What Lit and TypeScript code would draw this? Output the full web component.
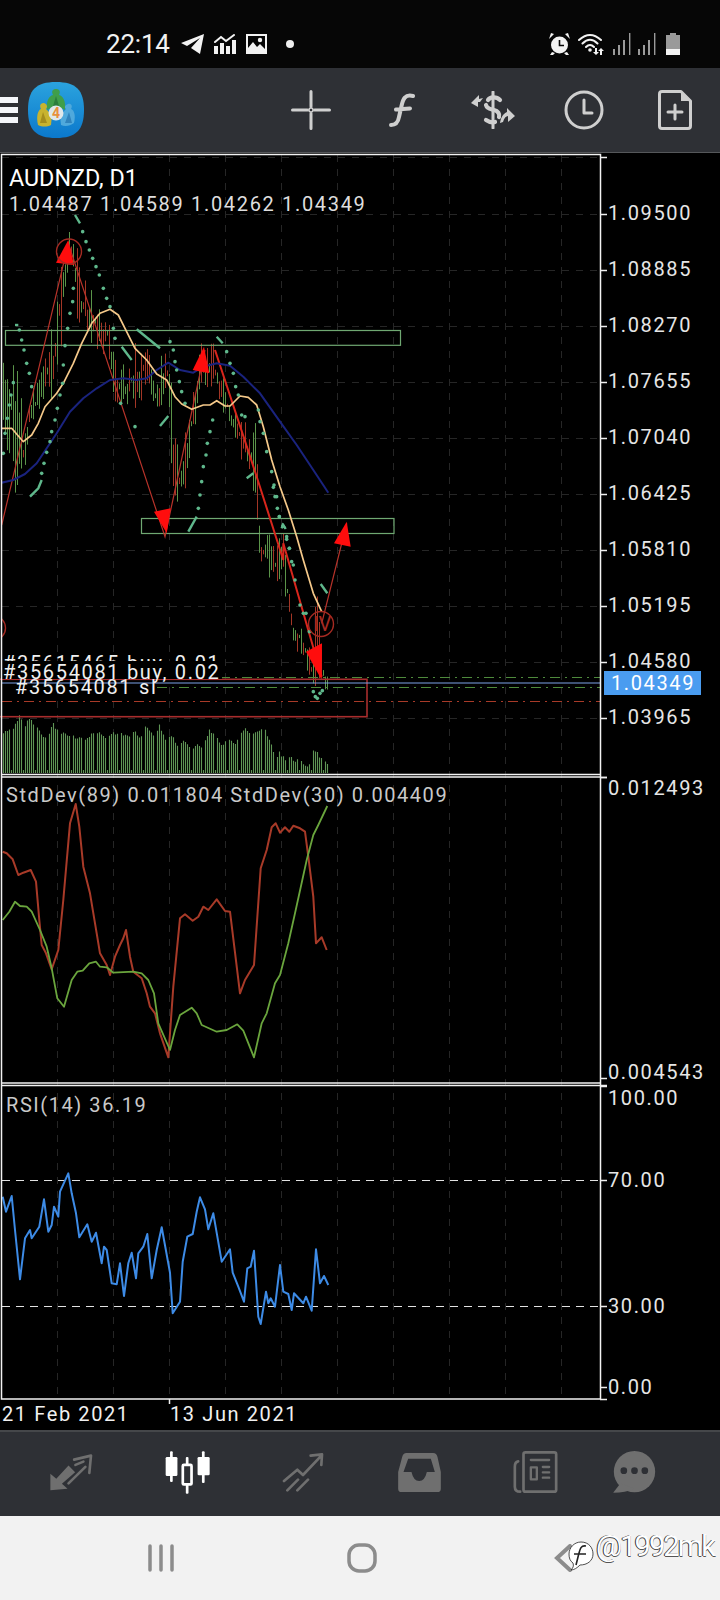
import { LitElement, html, css, svg } from "lit";
import { customElement } from "lit/decorators.js";

type P = [number, number];
// traced coordinates come in 3x crop units: map them back to page pixels
const z = (pts: number[], ox: number, oy: number): P[] => {
  const out: P[] = [];
  for (let i = 0; i < pts.length; i += 2) out.push([pts[i] / 3 + ox, pts[i + 1] / 3 + oy]);
  return out;
};
const pl = (p: P[]) => p.map((q) => `${q[0].toFixed(1)},${q[1].toFixed(1)}`).join(" ");
const rng = (seed: number) => () => {
  seed = (seed * 1664525 + 1013904223) >>> 0;
  return seed / 4294967296;
};

const YELLOW = [
  ...z([5,685,35,685,70,725,95,705,115,670,135,620,170,580,190,550,220,490,245,430,275,370,300,340,330,328,355,345,375,385,405,445,440,480,470,522,500,540,525,590,545,612,575,628,610,615,630,615,650,602,675,618,690,618,720,588,745,592,770,615,790,680,815,780,840,860,865,930,890,1010,910,1080], 0, 200),
  ...z([550,240,580,340,605,395], 120, 480),
];
const BLUE = z([5,848,40,840,75,822,110,790,140,745,170,700,210,635,250,595,290,565,330,540,370,535,410,540,440,535,470,510,505,488,540,510,580,518,610,500,650,490,690,497,730,530,780,580,840,665,890,735,940,810,985,878], 0, 200);
const STD_RED = z([8,215,20,220,38,238,55,285,70,278,92,270,108,305,118,420,125,495,138,520,155,568,175,510,190,360,210,130,227,72,238,140,250,260,270,340,290,460,300,520,320,555,330,585,345,530,360,495,370,475,378,450,390,530,400,575,425,595,440,640,450,680,465,700,480,760,505,832,520,620,540,415,555,403,578,422,595,410,610,380,625,390,650,358,675,393,690,395,720,640,735,600,762,555,782,265,800,210,815,142,827,130,840,158,855,142,868,155,880,137,900,145,915,155,925,230,940,350,948,490,965,472,980,510], 0, 780);
const STD_GREEN = z([8,420,28,395,45,365,60,378,80,380,95,395,120,450,140,500,155,565,172,655,192,680,215,600,232,575,248,572,268,550,288,545,300,560,320,562,340,578,400,575,425,580,445,600,462,640,475,730,510,810,525,750,540,705,575,683,590,700,605,735,650,755,680,750,712,733,730,752,762,832,785,730,800,700,825,610,840,585,865,490,885,400,920,240,940,165,955,135,982,78], 0, 780);
const RSI = z([8,320,18,365,35,318,45,420,60,568,75,445,90,420,95,445,118,410,132,328,145,425,155,405,162,350,175,380,180,305,205,250,215,310,228,370,238,442,262,403,275,455,288,428,305,520,312,470,320,480,335,580,350,583,360,520,372,618,385,520,395,488,408,565,415,490,430,470,442,432,455,565,470,480,485,412,510,548,518,670,540,635,548,515,562,440,578,432,590,365,600,322,615,358,625,418,640,370,665,515,690,478,698,548,715,590,732,635,742,535,752,530,762,482,775,680,782,702,798,605,805,640,812,625,825,650,840,525,850,605,865,612,875,660,882,610,910,640,918,620,935,662,948,478,960,580,972,558,985,585], 0, 1090);

// [x, high, low] envelope of the candle wicks
const BAND: [number, number, number][] = [];
const band2 = [10,460,680,45,370,880,75,700,870,90,570,670,110,550,670,135,430,620,160,370,600,185,80,470,205,95,190,218,50,250,240,180,420,260,245,420,285,280,440,305,330,465,325,330,470,345,470,610,370,470,680,390,500,580,410,395,670,440,420,560,465,520,660,490,450,640,505,430,600,520,600,900,540,760,940,555,700,900,580,570,700,600,420,620,620,440,560,640,415,590,655,455,620,680,560,660,710,650,720,725,640,790,745,680,830,770,620,960];
for (let i = 0; i < band2.length; i += 3) BAND.push([band2[i] / 3, band2[i + 1] / 3 + 200, band2[i + 2] / 3 + 200]);
const band3 = [415,0,250,425,150,280,445,150,290,470,200,320,490,130,340,500,250,380,515,370,480,525,420,510,540,420,520,555,450,550,575,500,640,590,310,650,605,480,650,617,510,680,625,545,630];
for (let i = 0; i < band3.length; i += 3) BAND.push([band3[i] / 3 + 120, band3[i + 1] / 3 + 480, band3[i + 2] / 3 + 480]);

const bandAt = (x: number): [number, number] => {
  let i = 0;
  while (i < BAND.length - 2 && BAND[i + 1][0] < x) i++;
  const a = BAND[i], b = BAND[i + 1];
  const t = Math.max(0, Math.min(1, (x - a[0]) / (b[0] - a[0] || 1)));
  return [a[1] + (b[1] - a[1]) * t, a[2] + (b[2] - a[2]) * t];
};

const VOL_TOP = z([8,335,45,315,58,278,75,315,90,285,115,325,140,350,160,305,180,335,195,335,215,345,235,345,250,355,262,345,295,330,320,345,340,335,365,335,385,345,400,325,420,345,440,310,460,345,478,310,495,350,515,340,535,370,550,355,575,375,595,370,610,375,628,320,650,350,670,370,690,350,710,365,735,310,755,345,770,330,790,315,810,350,825,410,840,390,855,415,870,405,885,415,905,420,925,430,945,380,960,405,982,430], 0, 620);
const volAt = (x: number) => {
  let i = 0;
  while (i < VOL_TOP.length - 2 && VOL_TOP[i + 1][0] < x) i++;
  const a = VOL_TOP[i], b = VOL_TOP[i + 1];
  return a[1] + (b[1] - a[1]) * Math.max(0, Math.min(1, (x - a[0]) / (b[0] - a[0])));
};

const candles = () => {
  const r = rng(77);
  const green: string[] = [], red: string[] = [], vols: string[] = [];
  for (let i = 0; i < 163; i++) {
    const x = 3.5 + 2 * i;
    const [hi, lo] = bandAt(x);
    const h = lo - hi;
    const weekend = i % 6 === 4;
    const y1 = weekend ? hi + h * 0.45 : hi + r() * h * 0.5;
    const y2 = weekend ? hi + h * 0.55 : lo - r() * h * 0.4;
    const seg = `M${x} ${y1.toFixed(1)}V${y2.toFixed(1)}`;
    (r() > 0.5 ? green : red).push(seg);
    const top = weekend ? 770 : volAt(x) + r() * 4;
    vols.push(`M${x} ${top.toFixed(1)}V773`);
  }
  return { green: green.join(""), red: red.join(""), vols: vols.join("") };
};
const CANDLES = candles();

const SAR_SOLID = [
  z([225,45,240,70], 0, 200), z([90,890,115,865,125,840], 0, 200), z([365,440,395,480], 0, 200),
  z([410,388,480,445], 0, 200), z([480,678,505,648], 0, 200), z([565,995,590,950], 0, 200),
  z([650,410,668,430], 0, 200), z([740,835,760,820], 0, 200), z([845,985,848,975,856,985], 0, 200),
  z([45,375,55,375], 0, 200), z([602,312,622,340], 120, 480), z([485,140,490,135,497,147], 120, 480),
];
const SAR_DOTS = [
  ...z([248,95,258,125,268,150,278,175,288,200,298,225,310,265,320,295,330,320,340,385,345,415,10,760,15,700,22,655,28,615,33,585,40,548,58,390,65,420,72,450,80,490,88,520,95,560,125,820,132,790,140,757,150,725,155,695,165,660,172,625,180,585,188,550,190,495,195,437,203,385,210,340,218,305,220,265,362,610,405,680,510,425,520,450,525,485,530,510,538,545,545,575,555,610,595,925,600,885,605,845,610,800,618,765,622,730,630,695,638,660,680,455,690,490,700,520,707,560,715,585,725,645,735,650,775,630,780,665,790,700,800,755,815,815,822,855,830,890,838,950,860,1010,868,1045], 0, 200),
  ...z([460,22,465,50,472,85,478,110,500,178,508,205,515,245,520,255,525,300,540,375,550,400,558,400,568,455,580,635,586,650,592,655,600,640,607,632], 120, 480),
];

const GRID_X = [57, 113, 169, 225, 281, 337, 393, 449, 505, 561];
const PRICES: [string, number][] = [["1.09500",214],["1.08885",270],["1.08270",326],["1.07655",382],["1.07040",438],["1.06425",494],["1.05810",550],["1.05195",606],["1.04580",662],["1.03965",718]];
const SCALE_LABELS: [string, number, number][] = [["0.012493",777,795],["0.004543",1078,1079],["100.00",1086,1105],["70.00",1180,1187],["30.00",1306,1313],["0.00",1387,1394]];

@customElement("app-root")
export class AppRoot extends LitElement {
  static styles = css`
    :host { display: block; width: 720px; height: 1600px; background: #000; font-family: Roboto, "Noto Sans", sans-serif; overflow: hidden; }
    .status { height: 68px; box-sizing: border-box; padding: 20px 40px 0 106px; background: #060606; display: flex; align-items: center; color: #f2f2f2; }
    .time { font-size: 26px; width: 65px; letter-spacing: -0.2px; }
    .status svg { display: block; flex: none; }
    .s-left { display: flex; align-items: center; gap: 10px; }
    .dot { width: 8px; height: 8px; border-radius: 50%; background: #eee; margin-left: 9px; }
    .spacer { flex: 1; }
    .s-right { display: flex; align-items: center; gap: 7px; }
    .tools { height: 84px; background: #2e3035; border-bottom: 1px solid #55575a; box-sizing: content-box; display: flex; align-items: center; }
    .burger { width: 18px; height: 26px; display: flex; flex-direction: column; justify-content: space-between; margin-right: 10px; }
    .burger i { display: block; height: 6px; background: #f4f6fa; }
    .logo { display: block; flex: none; }
    .cell { width: 91px; display: flex; justify-content: center; flex: none; }
    .cell svg { display: block; }
    .chart { display: block; width: 720px; height: 1277px; background: #000; }
    .grid { stroke: #262626; stroke-width: 1; stroke-dasharray: 7 7; fill: none; }
    .frame { stroke: #f2f2f2; stroke-width: 1.5; fill: none; }
    .tick { stroke: #eee; stroke-width: 1.5; }
    .lbl { fill: #e6e6e6; font-size: 20px; letter-spacing: 1.62px; }
    .tag { fill: #4a9cf0; }
    .tagt { fill: #fff; font-size: 20px; letter-spacing: 1.62px; }
    .sym { fill: #fff; font-size: 23.3px; }
    .ohlc { fill: #dedede; font-size: 20px; letter-spacing: 1.67px; }
    .ind { fill: #c9c9c9; font-size: 20px; letter-spacing: 1.56px; }
    .date { fill: #f0f0f0; font-size: 20px; letter-spacing: 1.6px; }
    .ord { fill: #f0f0f0; font-size: 20px; letter-spacing: 1.67px; }
    .cg { stroke: #5a9449; stroke-width: 1; fill: none; }
    .cr { stroke: #a33626; stroke-width: 1; fill: none; }
    .vol { stroke: #5f9555; stroke-width: 1.1; fill: none; }
    .ma-y { stroke: #f5c98a; stroke-width: 1.7; fill: none; stroke-linejoin: round; }
    .ma-b { stroke: #1a237e; stroke-width: 2; fill: none; stroke-linejoin: round; }
    .sar { stroke: #5fb88c; stroke-width: 2.4; fill: none; }
    .sard { fill: #5fb88c; }
    .zone { stroke: #6fa872; stroke-width: 1.2; fill: none; }
    .zig { stroke: #b8332a; stroke-width: 1.2; fill: none; }
    .zig2 { stroke: #d9261c; stroke-width: 2; fill: none; }
    .arr { fill: #ff0d0d; }
    .ring { stroke: #a52a22; stroke-width: 1.4; fill: none; }
    .iv { fill: #a52a22; font-size: 20px; }
    .rbox { stroke: #a82d2d; stroke-width: 1.6; fill: none; }
    .ln-b { stroke: #7da2e8; stroke-width: 1.2; }
    .ln-g { stroke: #4e8a3c; stroke-width: 1; stroke-dasharray: 10 5 2 5; }
    .ln-r { stroke: #a83a28; stroke-width: 1; stroke-dasharray: 10 5 2 5; }
    .blank { fill: #000; }
    .s-r { stroke: #a83a28; stroke-width: 2; fill: none; stroke-linejoin: round; }
    .s-g { stroke: #6aa53d; stroke-width: 1.8; fill: none; stroke-linejoin: round; }
    .rsi { stroke: #3d8be6; stroke-width: 2; fill: none; stroke-linejoin: round; }
    .lvl { stroke: #e2e2e2; stroke-width: 1.2; stroke-dasharray: 8 6; }
    .nav { height: 84px; box-sizing: border-box; border-top: 2px solid #45474a; background: #2e3035; display: flex; align-items: center; padding: 0 0 4px 13px; height: 86px; }
    .nc { width: 116px; display: flex; justify-content: center; flex: none; }
    .nc.last { width: 82px; }
    .nc svg { display: block; }
    .g { fill: #6f6f6f; }
    .gs { stroke: #6f6f6f; fill: none; stroke-width: 8; stroke-linecap: round; stroke-linejoin: round; }
    .w { fill: #fff; }
    .ws { stroke: #fff; fill: none; stroke-width: 8; stroke-linecap: round; }
    .t { stroke: #cfcfcf; fill: none; stroke-width: 3; stroke-linecap: round; stroke-linejoin: round; }
    .tf { fill: #cfcfcf; }
    .sys { height: 84px; background: #f2f2f2; display: flex; align-items: center; position: relative; }
    .sys svg { display: block; flex: none; }
    .mark { position: absolute; left: 596px; top: 13px; font-size: 29px; letter-spacing: -1.9px; color: #fff; text-shadow: -1px 0 #333, 0 1px #555; white-space: nowrap; }
    .mark-icon { position: absolute; left: 568px; top: 25px; }
    .sb { fill: #f2f2f2; }
    .sbs { stroke: #f2f2f2; stroke-width: 2; fill: none; stroke-linecap: round; }
    .sd { fill: #9a9a9a; }
    .skt { stroke: #060606; stroke-width: 1.6; fill: none; }
    .sys-i { fill: none; stroke: #8c8c8c; stroke-width: 3.5; stroke-linecap: round; }
    .sys-mid { margin-left: 173px; }
    .sys-back { margin-left: 177px; }
    .sys-first { margin-left: 148px; }
    .wm { fill: #fff; stroke: #222; stroke-width: 0.8; }
    .wmf { stroke: #222; stroke-width: 1.6; fill: none; }
    .lg-g { fill: #3f9e4a; }
    .lg-gd { fill: #2b7d3c; }
    .lg-y { fill: #c8b32e; }
    .lg-yd { fill: #a48d1c; }
    .lg-b { fill: #4fa9dc; }
    .lg-bd { fill: #2f83bd; }
    .lg-w { fill: #dfe7ea; }
    .lg-4 { fill: #e8903a; font-size: 14px; font-weight: 700; }
  `;

  private statusIcons() {
    return html`
      <div class="s-left">
        <span class="time">22:14</span>
        <svg width="23" height="20" viewBox="0 0 23 20"><path class="sb" d="M23 0 L0 9 L6 12 L19 4 L10 14 L19 20 Z"/></svg>
        <svg width="22" height="20" viewBox="0 0 22 20"><path class="sb" d="M0 12h4v8H0zM6 9h4v11H6zM12 12h4v8h-4zM18 6h4v14h-4z"/><path class="sbs" d="M1 8 L7 3 L12 7 L20 1"/></svg>
        <svg width="21" height="20" viewBox="0 0 21 20"><path class="sb" fill-rule="evenodd" d="M0 0H21V20H0Z M2 2V14L7 8L11 13L14 10L19 15V2Z"/><circle class="sb" cx="14" cy="6" r="2.2"/></svg>
        <span class="dot"></span>
      </div>
      <span class="spacer"></span>
      <div class="s-right">
        <svg width="23" height="22" viewBox="0 0 23 22">
          <circle class="sb" cx="11.5" cy="12" r="8.5"/><path class="skt" d="M11.5 7v5.5H16"/>
          <path class="sb" d="M1 6 L6 1 L3 0 Z M22 6 L17 1 L20 0 Z M4 19l-2 3h3l2-2zM19 19l2 3h-3l-2-2z"/>
        </svg>
        <svg width="28" height="22" viewBox="0 0 28 22">
          <path class="sbs" d="M1 7 Q12 -3 23 7M4.5 10.5 Q12 3 19.5 10.5M8 14 Q12 10 16 14"/>
          <circle class="sb" cx="12" cy="17" r="1.8"/>
          <path class="sb" d="M17 15h2v4h2l-3 3-3-3h2zM24 22h-2v-4h-2l3-3 3 3h-2z"/>
        </svg>
        <svg width="19" height="22" viewBox="0 0 19 22"><path class="sd" d="M0 16h2v6H0zM5 12h2v10H5zM10 7h2v15h-2zM16 0h1.4v22H16z"/></svg>
        <svg width="19" height="22" viewBox="0 0 19 22" style="margin-left:-0.5px"><path class="sd" d="M0 16h2v6H0zM5 12h2v10H5zM10 7h2v15h-2zM16 0h1.4v22H16z"/></svg>
        <svg width="14" height="22" viewBox="0 0 14 22" style="margin-left:2px"><path class="sd" d="M4 0h6v2h4v14H0V2h4z" /><rect class="sb" y="16" width="14" height="6"/></svg>
      </div>`;
  }

  private toolbar() {
    return html`
      <div class="tools">
        <div class="burger"><i></i><i></i><i></i></div>
        <svg class="logo" width="56" height="56" viewBox="0 0 56 56">
          <defs><linearGradient id="lg" x1="0" y1="0" x2="0" y2="1"><stop offset="0" stop-color="#2ba3de"/><stop offset="1" stop-color="#0b78cc"/></linearGradient></defs>
          <path fill="url(#lg)" d="M28 0 C48 0 56 8 56 28 C56 48 48 56 28 56 C8 56 0 48 0 28 C0 8 8 0 28 0Z"/>
          <path class="lg-g" d="M19 28 C18 19 21 14 25 13 C23 9 25 7 28 7 C31 7 33 9 31 13 C35 14 38 19 37 28 C32 24 24 24 19 28Z"/>
          <path class="lg-gd" d="M28 14 L31 24 L25 24Z"/>
          <path class="lg-y" d="M10 43 C8 34 10 28 13 27 C11 23 13 21 16 21 C19 22 20 25 18 27 L24 33 L23 43 C19 45 14 45 10 43Z"/>
          <path class="lg-yd" d="M15 30 L19 41 L12 41Z"/>
          <path class="lg-b" d="M46 41 C48 33 46 28 43 27 C45 24 43 21 40 22 C37 23 36 25 38 27 L32 34 L33 43 C37 45 42 44 46 41Z"/>
          <path class="lg-bd" d="M41 30 L37 41 L44 41Z"/>
          <circle class="lg-w" cx="28" cy="31" r="7.500"/><text class="lg-4" x="24" y="36">4</text>
        </svg>
        <span class="spacer" style="flex:1"></span>
        <div class="cell"><svg width="40" height="40" viewBox="0 0 40 40">
          <path class="t" d="M1.500 20H16.500M23.500 20H38.500M20 1.500V16.500M20 23.500V38.500"/><circle class="t" style="stroke-width:1.5" cx="20" cy="20" r="2"/></svg></div>
        <div class="cell"><svg width="26" height="34" viewBox="0 0 26 34">
          <path class="t" style="stroke-width:4" d="M24 3 C16 1 14 6 12.500 13 L10 24 C9 30 6 32 2 32M7 16.500 L21 15.500"/></svg></div>
        <div class="cell"><svg width="46" height="38" viewBox="0 0 46 38">
          <path class="t" d="M23 1V37"/>
          <path class="t" style="stroke-width:4.2" d="M30 9 C26 5 20 6 18 9 M16 14 C17 18 21 18 24 19 C28 20 30 23 29 26 M25 31 C22 32 19 31 16 29"/>
          <path class="tf" d="M1 12 L9 4 L9 8 L13 7 L10 11 L8 11 L8 16 Z M45 25 L37 17 L37 21 C33 23 31 26 30 32 L33 31 C34 27 36 25 38 25 L38 31 Z"/></svg></div>
        <div class="cell"><svg width="40" height="40" viewBox="0 0 40 40">
          <circle class="t" cx="20" cy="20" r="18"/><path class="t" d="M20 10V23H28"/></svg></div>
        <div class="cell"><svg width="34" height="40" viewBox="0 0 34 40">
          <path class="t" d="M4 1.500H23L32.500 11V36C32.500 37.500 31.500 38.500 30 38.500H4C2.500 38.500 1.500 37.500 1.500 36V4C1.500 2.500 2.500 1.500 4 1.500Z"/>
          <path class="tf" d="M23 1.500 L32.500 11 H23Z"/><path class="t" d="M17 15V29M10 22H24"/></svg></div>
      </div>`;
  }

  private chart() {
    return svg`
      <defs>
        <clipPath id="pc"><rect x="2" y="155" width="598" height="619"/></clipPath>
      </defs>
      ${GRID_X.map((x) => svg`<path class="grid" d="M${x + 0.5} 155V1399"/>`)}
      <path class="grid" d="M2 157.500H600"/>
      ${PRICES.map(([, y]) => svg`<path class="grid" d="M2 ${y + 0.5}H600"/>`)}

      <g clip-path="url(#pc)">
        <path class="cg" d=${CANDLES.green}/>
        <path class="cr" d=${CANDLES.red}/>
        <path class="vol" d=${CANDLES.vols}/>
        <rect class="zone" x="5.500" y="330.500" width="395" height="14.800"/>
        <rect class="zone" x="141.500" y="518.500" width="252.500" height="15"/>
        <polyline class="zig" points=${pl(z([5,975,205,130,495,1010,615,450], 0, 200))}/>
        <polyline class="zig2" points=${pl([...z([645,450,770,830,850,1080], 0, 200), ...z([490,190,605,590], 120, 480)])}/>
        <polyline class="zig" points=${pl(z([605,430,680,130], 120, 480))}/>
        <polyline class="ma-b" points=${pl(BLUE)}/>
        <polyline class="ma-y" points=${pl(YELLOW)}/>
        ${SAR_SOLID.map((s) => svg`<polyline class="sar" points=${pl(s)}/>`)}
        ${SAR_DOTS.map((p) => svg`<circle class="sard" cx=${p[0]} cy=${p[1]} r="1.800"/>`)}
        <polygon class="arr" points=${pl(z([168,188,205,120,222,195], 0, 200))}/>
        <polygon class="arr" points=${pl(z([578,510,612,440,628,520], 0, 200))}/>
        <polygon class="arr" points=${pl(z([462,935,512,925,500,1000], 0, 200))}/>
        <polygon class="arr" points=${pl(z([1002,1030,1040,965,1052,1040], 0, 200))}/>
        <polygon class="arr" points=${pl(z([558,515,606,490,605,600], 120, 480))}/>
        <circle class="ring" cx="69" cy="251.500" r="12.500"/>
        <circle class="ring" cx="321" cy="624" r="12.500"/>
        <text class="iv" x="313" y="631">IV</text>
        <circle class="ring" cx="-7" cy="628" r="12.500"/>
        <path class="ln-g" d="M220 677.500H600"/>
        <path class="ln-g" d="M157 687.500H600"/>
        <path class="ln-r" d="M2 701.500H600"/>
      </g>
      <rect class="rbox" x="-2" y="679.300" width="369" height="37.400"/>
      <path class="ln-b" d="M2 683H600"/>

      <text class="sym" x="9" y="186">AUDNZD, D1</text>
      <text class="ohlc" x="9" y="211">1.04487 1.04589 1.04262 1.04349</text>
      <text class="ord" x="3" y="670">#35615465 buy, 0.01</text>
      <rect class="blank" x="2" y="661" width="220" height="18"/>
      <text class="ord" x="3" y="679">#35654081 buy, 0.02</text>
      <text class="ord" x="15" y="694">#35654081 sl</text>

      <polyline class="s-r" points=${pl(STD_RED)}/>
      <polyline class="s-g" points=${pl(STD_GREEN)}/>
      <text class="ind" x="6" y="802">StdDev(89) 0.011804 StdDev(30) 0.004409</text>

      <path class="lvl" d="M2 1180.500H600"/>
      <path class="lvl" d="M2 1306.500H600"/>
      <polyline class="rsi" points=${pl(RSI)}/>
      <text class="ind" x="6" y="1112">RSI(14) 36.19</text>

      <path class="frame" d="M1.500 154.500H600.500V1399H1.500ZM1.500 774.500H600.500M1.500 777H600.500M1.500 1083H600.500M1.500 1085.500H600.500"/>
      <path class="tick" d="M600 157.500H607M600 777.500H607M600 1085.500H607M600 1399.500H607M169.500 1399V1404"/>
      ${PRICES.map(([t, y]) => svg`<path class="tick" d="M600 ${y + 0.5}H607"/><text class="lbl" x="608" y=${y + 6}>${t}</text>`)}
      ${SCALE_LABELS.map(([t, ty, by]) => svg`<path class="tick" d="M600 ${ty + 0.5}H607"/><text class="lbl" x="608" y=${by}>${t}</text>`)}
      <rect class="tag" x="604" y="671" width="97" height="24"/>
      <text class="tagt" x="611" y="690">1.04349</text>
      <text class="date" x="2" y="1421">21 Feb 2021</text>
      <text class="date" x="170" y="1421">13 Jun 2021</text>`;
  }

  private nav() {
    return html`
      <div class="nav">
        <div class="nc"><svg width="43" height="37" viewBox="60 45 128 112">
          <path class="g" d="M60 105V155L112 150L95 135L135 100L115 80L78 120Z"/>
          <path class="gs" d="M132 62L183 50L178 102M115 134L166 84M136 78L160 68"/></svg></div>
        <div class="nc"><svg width="45" height="43" viewBox="403 33 134 127">
          <rect class="w" x="405" y="50" width="35" height="57" rx="4"/><rect class="w" x="418" y="33" width="8" height="92" rx="3"/>
          <rect class="w" x="500" y="50" width="36" height="55" rx="4"/><rect class="w" x="513" y="33" width="8" height="95" rx="3"/>
          <rect class="w" x="465" y="50" width="8" height="110" rx="3"/>
          <rect style="fill:#2e3035;stroke:#fff;stroke-width:8" x="456" y="74" width="26" height="58" rx="3"/></svg></div>
        <div class="nc"><svg width="42" height="39" viewBox="752 38 126 117">
          <path class="gs" d="M758 122L798 88L815 104L868 48M838 46L872 42L870 74M768 150L800 118M798 150L830 118"/></svg></div>
        <div class="nc"><svg width="43" height="39" viewBox="50 38 128 117">
          <path class="g" fill-rule="evenodd" d="M75 38H155Q165 38 168 50L178 95V145Q178 155 168 155H60Q50 155 50 145V95L62 50Q65 38 75 38ZM80 55L66 95H90Q96 122 113 122Q130 122 136 95H160L148 55Z"/></svg></div>
        <div class="nc"><svg width="45" height="42" viewBox="395 33 134 126">
          <path class="gs" d="M410 64Q400 66 400 80V140Q400 155 416 155"/>
          <rect class="gs" x="426" y="37" width="98" height="118" rx="6"/>
          <path class="gs" style="stroke-width:7" d="M448 60H503M484 81H503M484 97H503M484 113H503"/>
          <rect class="gs" style="stroke-width:7" x="448" y="82" width="18" height="36"/></svg></div>
        <div class="nc last"><svg width="43" height="42" viewBox="698 33 128 126">
          <circle class="g" cx="762" cy="95" r="62"/><path class="g" d="M720 130L698 158Q735 158 762 146Z"/>
          <circle style="fill:#2e3035" cx="730" cy="92" r="10"/><circle style="fill:#2e3035" cx="762" cy="92" r="10"/><circle style="fill:#2e3035" cx="793" cy="92" r="10"/></svg></div>
      </div>`;
  }

  render() {
    return html`
      <div class="status">${this.statusIcons()}</div>
      ${this.toolbar()}
      <svg class="chart" viewBox="0 153 720 1277">${this.chart()}</svg>
      ${this.nav()}
      <div class="sys">
        <svg class="sys-first" width="26" height="28" viewBox="0 0 26 28"><path class="sys-i" d="M2 2V26M13 2V26M24 2V26"/></svg>
        <svg class="sys-mid" width="30" height="30" viewBox="0 0 30 30"><rect class="sys-i" x="2" y="2" width="26" height="26" rx="10"/></svg>
        <svg class="sys-back" width="18" height="28" viewBox="0 0 18 28"><path class="sys-i" style="stroke-width:4" d="M16 2L3 14L16 26"/></svg>
        <svg class="mark-icon" width="26" height="30" viewBox="0 0 26 30"><path class="wm" d="M13 1C21 1 25 7 25 13C25 20 19 24 12 24C9 27 6 29 3 29C5 27 6 25 5 22C2 20 1 17 1 13C1 7 6 1 13 1Z"/><path class="wmf" d="M18 5C13 4 12 8 11 12L8 24M6 13H18"/></svg>
        <span class="mark">@1992mk</span>
      </div>`;
  }
}
